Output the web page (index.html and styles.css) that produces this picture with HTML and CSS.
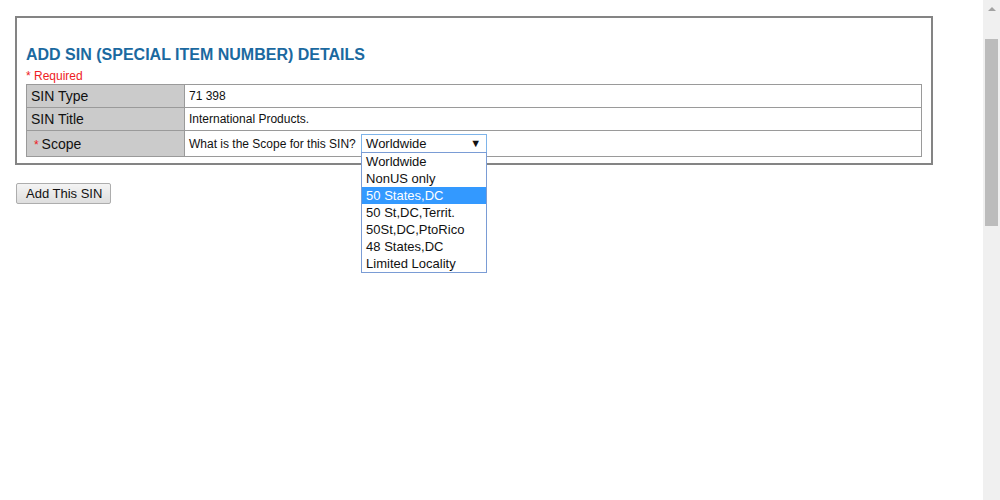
FILE: index.html
```html
<!DOCTYPE html>
<html>
<head>
<meta charset="utf-8">
<title>Add SIN</title>
<link rel="stylesheet" href="styles.css">
</head>
<body>
<div class="page">
  <div class="panel">
    <h2 class="title">ADD SIN (SPECIAL ITEM NUMBER) DETAILS</h2>
    <div class="required">* Required</div>
    <table class="details">
      <tr>
        <td class="label">SIN Type</td>
        <td class="value">71 398</td>
      </tr>
      <tr>
        <td class="label">SIN Title</td>
        <td class="value">International Products.</td>
      </tr>
      <tr class="scope-row">
        <td class="label"><span class="star">*</span> Scope</td>
        <td class="value">
          <span class="question">What is the Scope for this SIN?</span>
          <div class="select-wrap">
            <div class="select"><span class="select-text">Worldwide</span><span class="arrow">&#9660;</span></div>
            <ul class="options">
              <li class="option">Worldwide</li>
              <li class="option">NonUS only</li>
              <li class="option selected">50 States,DC</li>
              <li class="option">50 St,DC,Territ.</li>
              <li class="option">50St,DC,PtoRico</li>
              <li class="option">48 States,DC</li>
              <li class="option">Limited Locality</li>
            </ul>
          </div>
        </td>
      </tr>
    </table>
  </div>
  <div class="actions">
    <button class="btn" type="button">Add This SIN</button>
  </div>
</div>
<div class="scrollbar">
  <div class="scroll-up"></div>
  <div class="scroll-thumb"></div>
</div>
</body>
</html>
```

FILE: styles.css
```css
html, body {
  margin: 0;
  padding: 0;
  height: 100%;
  background: #ffffff;
  font-family: "Liberation Sans", Arial, sans-serif;
  color: #000;
}

.page {
  box-sizing: border-box;
  min-height: 100%;
  padding: 16px 0 0 15px;
}

.panel {
  width: 896px;
  border: 2px solid #848484;
  padding: 27px 9px 6px 9px;
}

.title {
  margin: 0;
  font-size: 16px;
  line-height: 20px;
  font-weight: bold;
  color: #1b69a0;
}

.required {
  margin-top: 5px;
  font-size: 12px;
  line-height: 13px;
  color: #ee1c24;
}

.details {
  margin-top: 1px;
  width: 896px;
  border-collapse: collapse;
  border: 1px solid #9a9a9a;
}

.details td {
  border: 1px solid #9a9a9a;
  height: 22px;
  padding: 0 4px;
  vertical-align: middle;
}

.details .scope-row td {
  height: 25px;
}

.label {
  width: 149px;
  background: #cbcbcb;
  font-size: 14px;
  color: #111;
}

.star {
  color: #ee1c24;
  font-size: 12px;
  margin-left: 3px;
  margin-right: -1px;
}

.value {
  font-size: 12px;
  color: #111;
}

.question {
  vertical-align: middle;
}

.select-wrap {
  position: relative;
  display: inline-block;
  vertical-align: middle;
  margin-left: 2px;
  z-index: 10;
}

.select {
  display: flex;
  align-items: center;
  justify-content: space-between;
  box-sizing: border-box;
  width: 126px;
  height: 19px;
  border: 1px solid #7eb4ea;
  padding: 0 5px 0 4px;
  font-size: 13px;
  line-height: 17px;
  background: #fff;
}

.arrow {
  font-size: 11px;
  line-height: 11px;
  color: #111;
}

.options {
  position: absolute;
  left: 0;
  top: 18px;
  box-sizing: border-box;
  width: 126px;
  height: 121px;
  margin: 0;
  padding: 0;
  list-style: none;
  border: 1px solid #7a9cd5;
  background: #fff;
}

.option {
  display: block;
  height: 17px;
  line-height: 17px;
  padding-left: 4px;
  font-size: 13px;
  color: #111;
  white-space: nowrap;
}

.option.selected {
  background: #3399ff;
  color: #fff;
}

.actions {
  padding-top: 18px;
  padding-left: 1px;
}

.btn {
  font-family: "Liberation Sans", Arial, sans-serif;
  font-size: 13px;
  height: 21px;
  padding: 0 8px 0 9px;
  border: 1px solid #adadad;
  border-radius: 2px;
  background: linear-gradient(#f4f4f4, #dedede);
  color: #111;
  line-height: 19px;
}

.scrollbar {
  position: fixed;
  top: 0;
  right: 0;
  width: 17px;
  height: 100%;
  background: #f0f0f0;
}

.scroll-up {
  position: absolute;
  top: 7px;
  left: 5px;
  width: 0;
  height: 0;
  border-left: 4px solid transparent;
  border-right: 4px solid transparent;
  border-bottom: 4px solid #a3a3a3;
}

.scroll-thumb {
  position: absolute;
  top: 39px;
  left: 2px;
  width: 13px;
  height: 187px;
  background: #bcbcbc;
}
```
